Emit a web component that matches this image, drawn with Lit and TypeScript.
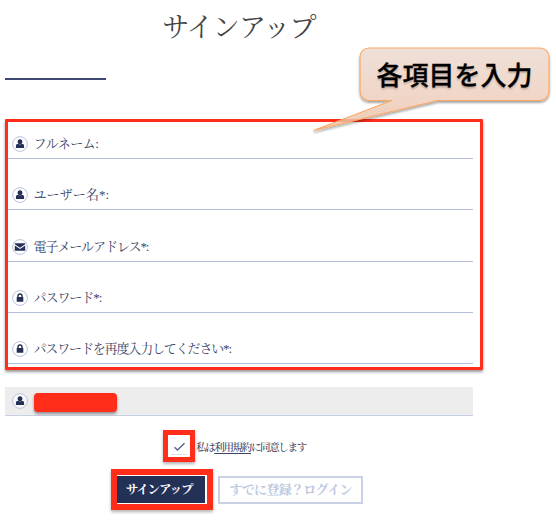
import { LitElement, html, css, svg } from "lit";
import { customElement } from "lit/decorators.js";

const glyphs = {
  user: svg`<path d="M8 3.200c1.500 0 2.400 1 2.400 2.500S9.500 8.200 8 8.200 5.600 7.200 5.600 5.700 6.500 3.200 8 3.200zM3.900 11.900V10c0-1.500 1-2.300 2.300-2.300.5.500 1.100.8 1.800.8s1.300-.3 1.800-.8c1.300 0 2.300.8 2.300 2.300v1.900z"/>`,
  mail: svg`<path d="M2.800 4.300h10.400v.9L8 8.700 2.800 5.200zM2.800 6.500 8 9.900l5.200-3.400v5.300H2.800z"/>`,
  lock: svg`<path fill-rule="evenodd" d="M4.700 7.100h.6V6a2.700 2.700 0 0 1 5.400 0v1.100h.6v4.600H4.700zM6.700 7.100h2.600V6a1.300 1.300 0 0 0-2.600 0z"/>`,
};

const icon = (name: keyof typeof glyphs) => html`
  <svg class="icon" viewBox="0 0 16 16" width="16" height="16">
    <circle cx="8" cy="8" r="7.400" fill="#fff" fill-opacity=".7" stroke="#bac2df" stroke-width="1" />
    <g fill="#243058">${glyphs[name]}</g>
  </svg>`;

const fields: { icon: keyof typeof glyphs; label: string; spacing: number }[] = [
  { icon: "user", label: "フルネーム:", spacing: -0.45 },
  { icon: "user", label: "ユーザー名*:", spacing: 0.1 },
  { icon: "mail", label: "電子メールアドレス*:", spacing: -1.05 },
  { icon: "lock", label: "パスワード*:", spacing: -1.05 },
  { icon: "lock", label: "パスワードを再度入力してください*:", spacing: -1.15 },
];

@customElement("app-root")
export class AppRoot extends LitElement {
  static styles = css`
    * { box-sizing: border-box; }
    :host {
      display: block;
      position: relative;
      width: 556px;
      height: 520px;
      overflow: hidden;
      background: #fff;
      color: #3b4466;
      font-family: "Liberation Serif", "Noto Serif CJK JP", "Noto Sans CJK JP", serif;
      white-space: nowrap;
    }
    .page { width: 468px; margin-left: 5px; display: flex; flex-direction: column; }
    h1 {
      margin: 0;
      height: 78px;
      padding-top: 9px;
      text-align: center;
      font-size: 27px;
      line-height: 38px;
      font-weight: 400;
      letter-spacing: -0.8px;
      color: #444;
    }
    .rule { width: 101px; height: 2px; background: #3e4872; }
    .fields {
      width: 478px;
      height: 251px;
      margin-top: 39px;
      border: 3px solid #ff2d1a;
      border-radius: 1px;
      box-shadow: 0 2px 3px rgba(0, 0, 0, .4);
      padding-right: 7px;
    }
    .field {
      height: 51.25px;
      display: flex;
      align-items: flex-end;
      gap: 6px;
      padding: 0 0 6px 3.500px;
      border-bottom: 1px solid #b4bdda;
    }
    .field:first-child { height: 37px; }
    .icon { flex: none; display: block; }
    .label { font-size: 13px; line-height: 16px; font-weight: 400; }
    .filled {
      height: 29px;
      margin-top: 17px;
      padding-left: 7px;
      display: flex;
      align-items: center;
      gap: 6px;
      background: #ededed;
      border-bottom: 1px solid #c8d0e5;
    }
    .mask {
      width: 83px;
      height: 19px;
      margin-top: 2px;
      border-radius: 4px;
      background: #ff2d1a;
      box-shadow: 0 2px 3px rgba(0, 0, 0, .4);
    }
    .terms { display: flex; align-items: center; height: 32px; margin: 14px 0 0 158px; }
    .check {
      width: 32px;
      height: 32px;
      border: 5px solid #ff2d1a;
      box-shadow: 0 2px 3px rgba(0, 0, 0, .3);
      display: grid;
      place-items: center;
    }
    .terms span { margin: 4px 0 0 1px; font-size: 10.500px; letter-spacing: -1.350px; line-height: 14px; font-weight: 500; }
    u { text-underline-offset: 2px; text-decoration-thickness: 1px; }
    .actions { display: flex; align-items: center; margin: 7px 0 0 106px; height: 41px; }
    .focus {
      width: 102px;
      height: 41px;
      border: 6px solid #ff2d1a;
      background: #fff;
      box-shadow: 0 2px 3px rgba(0, 0, 0, .3);
      padding: 1px 2px 1px 0;
    }
    button { border: 0; margin: 0; padding: 0; font: inherit; font-size: 12.500px; display: block; }
    .primary {
      width: 88px;
      height: 27px;
      padding: 0 4px 1px 0;
      background: #243156;
      color: #fff;
      font-weight: 700;
      letter-spacing: -1.100px;
    }
    .secondary {
      width: 145px;
      height: 28px;
      margin-left: 5px;
      border: 2px solid #c9d1e6;
      background: #fff;
      color: #bdc7df;
      font-weight: 700;
      font-size: 13px;
      letter-spacing: -0.700px;
      padding: 0 0 2px;
    }
    .callout { position: absolute; left: 306px; top: 40px; width: 250px; height: 100px; }
    .callout svg { display: block; }
    .callout p {
      position: absolute;
      left: 54px;
      top: 8px;
      width: 189px;
      height: 53px;
      margin: 0;
      text-align: center;
      font: 500 26px/52px "Noto Sans CJK JP", sans-serif;
      color: #000;
      -webkit-text-stroke: .3px #000;
      text-shadow: 0 2px 2px rgba(0, 0, 0, .22);
    }
  `;

  render() {
    return html`
      <main class="page">
        <h1>サインアップ</h1>
        <div class="rule"></div>
        <section class="fields">
          ${fields.map(
            (f) => html`<div class="field">
              ${icon(f.icon)}<span class="label" style="letter-spacing:${f.spacing}px">${f.label}</span>
            </div>`
          )}
        </section>
        <div class="filled">${icon("user")}<div class="mask"></div></div>
        <div class="terms">
          <div class="check">
            <svg width="20" height="20" viewBox="0 0 20 20">
              <path d="M5.500 11.200 8.500 14 15.500 7.300" fill="none" stroke="#56648a" stroke-width="1.400" />
              <path d="M2 18.500H18" stroke="#d9deeb" />
            </svg>
          </div>
          <span>私は<u>利用規約</u>に同意します</span>
        </div>
        <div class="actions">
          <div class="focus"><button class="primary">サインアップ</button></div>
          <button class="secondary">すでに登録？ログイン</button>
        </div>
      </main>
      <aside class="callout">
        <svg width="250" height="100" viewBox="0 0 250 100">
          <defs>
            <linearGradient id="fill" gradientUnits="userSpaceOnUse" x1="0" y1="8" x2="0" y2="91">
              <stop offset="0" stop-color="#eee0d8" />
              <stop offset=".65" stop-color="#f1d5c6" />
              <stop offset=".82" stop-color="#f3cdb6" stop-opacity=".85" />
              <stop offset="1" stop-color="#f8c09a" stop-opacity=".6" />
            </linearGradient>
            <filter id="shade" x="-10%" y="-10%" width="120%" height="130%">
              <feDropShadow dx="0" dy="2" stdDeviation="1.300" flood-opacity=".35" />
            </filter>
          </defs>
          <path
            d="M63 8H234a9 9 0 0 1 9 9V51.500a9 9 0 0 1-9 9H131.500L7.500 90.500 86 60.500H63a9 9 0 0 1-9-9V17a9 9 0 0 1 9-9z"
            fill="url(#fill)" stroke="#fba766" stroke-width="1.200" filter="url(#shade)" />
        </svg>
        <p>各項目を入力</p>
      </aside>
    `;
  }
}
